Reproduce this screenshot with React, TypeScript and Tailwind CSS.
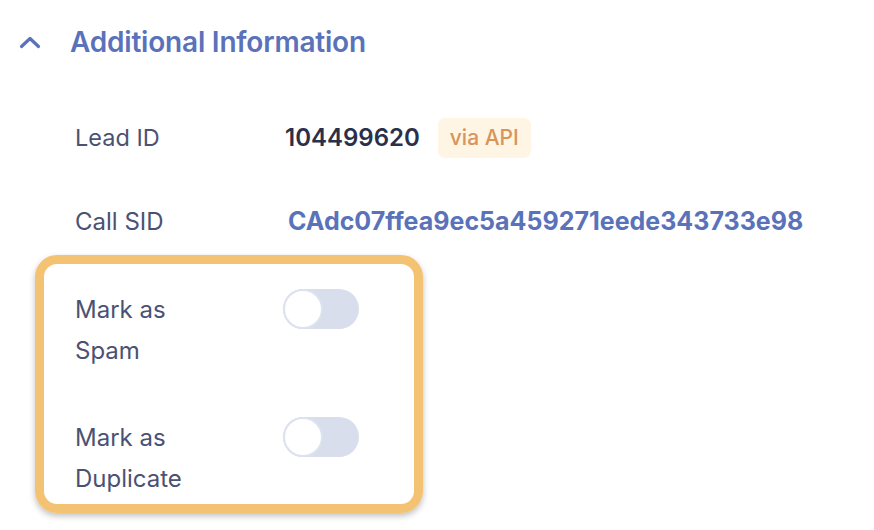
import React from 'react';

const font = { fontFamily: 'Inter, "Noto Sans", sans-serif' };

const Toggle: React.FC = () => (
  <div className="relative h-[40px] w-[76px] shrink-0 rounded-full bg-[#D8DEEB]">
    <div className="absolute left-0 top-0 h-[40px] w-[40px] rounded-full border-2 border-[#DCE2EE] bg-white" />
  </div>
);

const ToggleRow: React.FC<{ label: string[] }> = ({ label }) => (
  <div className="flex items-start">
    <div className="w-[208px] text-[24px] leading-[41px] text-[#4A5273]">
      {label.map((l) => (
        <div key={l}>{l}</div>
      ))}
    </div>
    <Toggle />
  </div>
);

export default function App() {
  return (
    <div className="h-[530px] w-[874px] bg-white" style={font}>
      <div className="flex h-[84px] items-center">
        <svg className="ml-[19px] mr-[29px]" width="22" height="13" viewBox="0 0 22 13" fill="none">
          <polyline points="2.5,10.5 11,2.5 19.5,10.5" stroke="#5A72BA" strokeWidth="3.2" strokeLinecap="round" strokeLinejoin="round" />
        </svg>
        <h2 className="text-[28px] font-semibold tracking-[-0.2px] text-[#5A72BA]">Additional Information</h2>
      </div>

      <div className="flex h-[108px] items-center pl-[75px]">
        <div className="w-[210px] text-[23.5px] text-[#4A5273]">Lead ID</div>
        <div className="text-[24px] font-semibold text-[#2A2F4A]">104499620</div>
        <span className="ml-[18px] flex h-[40px] items-center rounded-[7px] bg-[#FEF5E4] px-[12px] text-[21px] font-medium text-[#D8945A]">
          via API
        </span>
      </div>

      <div className="flex h-[60px] items-center pl-[75px]">
        <div className="w-[213px] text-[24px] text-[#4A5273]">Call SID</div>
        <div className="text-[25px] font-bold text-[#5A72BA]">CAdc07ffea9ec5a459271eede343733e98</div>
      </div>

      <div className="ml-[35px] mt-[3px] flex w-[388px] flex-col gap-[46px] rounded-[22px] border-[9px] border-[#F4C273] pb-[5px] pl-[31px] pt-[25px] shadow-[0_3px_6px_rgba(0,0,0,0.25)]">
        <ToggleRow label={['Mark as', 'Spam']} />
        <ToggleRow label={['Mark as', 'Duplicate']} />
      </div>
    </div>
  );
}
